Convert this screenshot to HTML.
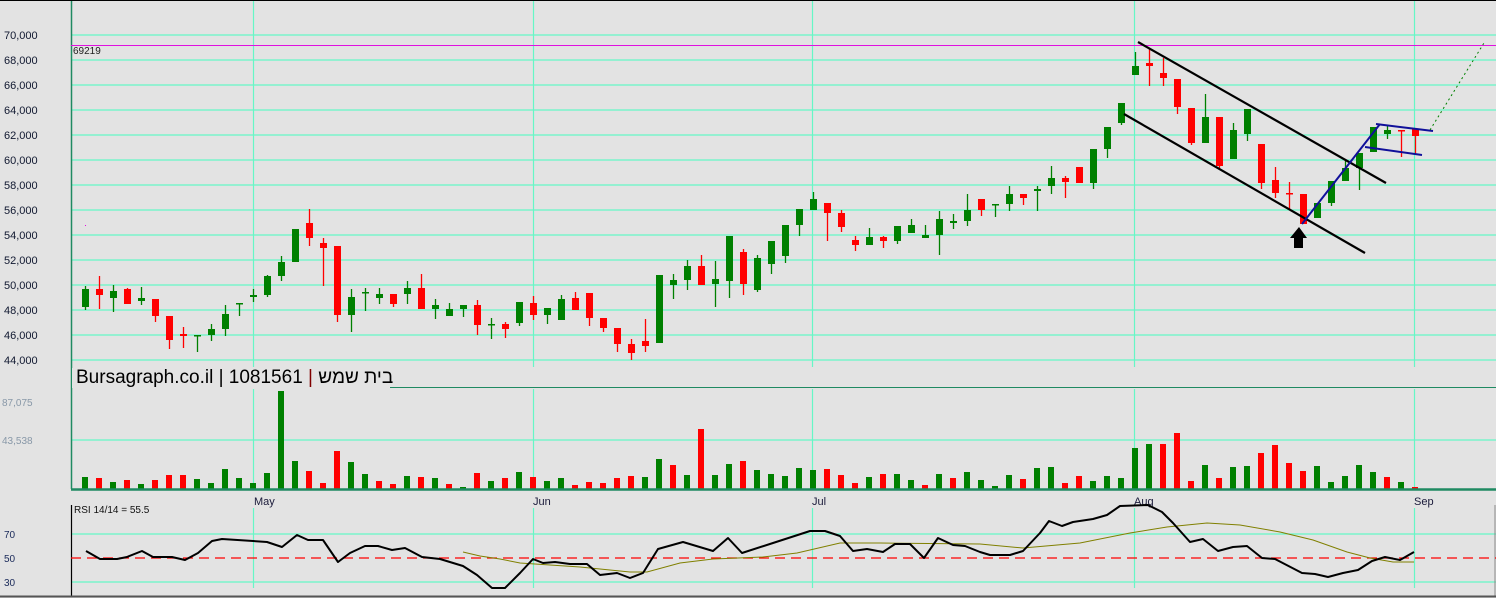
<!DOCTYPE html>
<html><head><meta charset="utf-8"><style>
html,body{margin:0;padding:0;background:#e3e3e3;}
svg{display:block;font-family:"Liberation Sans",sans-serif;}
#t{position:absolute;left:76px;top:367px;font:19px "Liberation Sans","Noto Sans CJK SC",sans-serif;color:#000;white-space:nowrap;line-height:22px;direction:ltr;}
</style></head><body>
<svg width="1496" height="598" viewBox="0 0 1496 598" xmlns="http://www.w3.org/2000/svg">
<rect width="1496" height="598" fill="#e3e3e3"/>
<line x1="0" y1="0.5" x2="1496" y2="0.5" stroke="#000" stroke-width="1"/>
<g stroke="#66f7c6" stroke-width="1.2">
<line x1="71" y1="35" x2="1496" y2="35"/><line x1="71" y1="60" x2="1496" y2="60"/><line x1="71" y1="85" x2="1496" y2="85"/><line x1="71" y1="110" x2="1496" y2="110"/><line x1="71" y1="135" x2="1496" y2="135"/><line x1="71" y1="160" x2="1496" y2="160"/><line x1="71" y1="185" x2="1496" y2="185"/><line x1="71" y1="210" x2="1496" y2="210"/><line x1="71" y1="235" x2="1496" y2="235"/><line x1="71" y1="260" x2="1496" y2="260"/><line x1="71" y1="285" x2="1496" y2="285"/><line x1="71" y1="310" x2="1496" y2="310"/><line x1="71" y1="335" x2="1496" y2="335"/><line x1="71" y1="360" x2="1496" y2="360"/>
<line x1="253.5" y1="1" x2="253.5" y2="367"/><line x1="533.5" y1="1" x2="533.5" y2="367"/><line x1="812.5" y1="1" x2="812.5" y2="367"/><line x1="1134.5" y1="1" x2="1134.5" y2="367"/><line x1="1414.5" y1="1" x2="1414.5" y2="367"/>
<line x1="253.5" y1="389" x2="253.5" y2="489"/><line x1="533.5" y1="389" x2="533.5" y2="489"/><line x1="812.5" y1="389" x2="812.5" y2="489"/><line x1="1134.5" y1="389" x2="1134.5" y2="489"/><line x1="1414.5" y1="389" x2="1414.5" y2="489"/>
<line x1="253.5" y1="508" x2="253.5" y2="588"/><line x1="533.5" y1="508" x2="533.5" y2="588"/><line x1="812.5" y1="508" x2="812.5" y2="588"/><line x1="1134.5" y1="508" x2="1134.5" y2="588"/><line x1="1414.5" y1="508" x2="1414.5" y2="588"/>
<line x1="71" y1="440" x2="1496" y2="440"/>
<line x1="71" y1="534" x2="1496" y2="534"/><line x1="71" y1="582" x2="1496" y2="582"/>
</g>
<line x1="71.5" y1="1" x2="71.5" y2="489" stroke="#1f8a62" stroke-width="1.5"/>
<line x1="71" y1="45.5" x2="1496" y2="45.5" stroke="#e010e0" stroke-width="1"/>
<text x="73" y="54" font-size="10" fill="#222">69219</text>
<rect x="85" y="225" width="1" height="1" fill="#e010e0"/>
<g font-size="11" fill="#101830">
<text x="4" y="39">70,000</text><text x="4" y="64">68,000</text><text x="4" y="89">66,000</text><text x="4" y="114">64,000</text><text x="4" y="139">62,000</text><text x="4" y="164">60,000</text><text x="4" y="189">58,000</text><text x="4" y="214">56,000</text><text x="4" y="239">54,000</text><text x="4" y="264">52,000</text><text x="4" y="289">50,000</text><text x="4" y="314">48,000</text><text x="4" y="339">46,000</text><text x="4" y="364">44,000</text>
</g>
<g stroke-width="1.3">
<g stroke="#008000" fill="#008000">
<line x1="85.5" y1="286" x2="85.5" y2="310"/><rect x="82" y="289" width="7" height="18" stroke="none"/>
<line x1="113.5" y1="285" x2="113.5" y2="312"/><rect x="110" y="291" width="7" height="7" stroke="none"/>
<line x1="141.5" y1="287" x2="141.5" y2="305"/><rect x="138" y="298" width="7" height="3" stroke="none"/>
<line x1="197.5" y1="335" x2="197.5" y2="352"/><rect x="194" y="335" width="7" height="1.5" stroke="none"/>
<line x1="211.5" y1="324" x2="211.5" y2="341"/><rect x="208" y="329" width="7" height="6" stroke="none"/>
<line x1="225.5" y1="305" x2="225.5" y2="336"/><rect x="222" y="314" width="7" height="15" stroke="none"/>
<line x1="239.5" y1="303" x2="239.5" y2="316"/><rect x="236" y="303" width="7" height="1.5" stroke="none"/>
<line x1="253.5" y1="289" x2="253.5" y2="302"/><rect x="250" y="295" width="7" height="2" stroke="none"/>
<line x1="267.5" y1="275" x2="267.5" y2="297"/><rect x="264" y="276" width="7" height="19" stroke="none"/>
<line x1="281.5" y1="256" x2="281.5" y2="281"/><rect x="278" y="262" width="7" height="14" stroke="none"/>
<rect x="292" y="229" width="7" height="33" stroke="none"/>
<line x1="351.5" y1="289" x2="351.5" y2="332"/><rect x="348" y="297" width="7" height="18" stroke="none"/>
<line x1="365.5" y1="288" x2="365.5" y2="311"/><rect x="362" y="292" width="7" height="1.5" stroke="none"/>
<line x1="379.5" y1="288" x2="379.5" y2="304"/><rect x="376" y="294" width="7" height="4" stroke="none"/>
<line x1="407.5" y1="281" x2="407.5" y2="304"/><rect x="404" y="288" width="7" height="6" stroke="none"/>
<line x1="435.5" y1="299" x2="435.5" y2="319"/><rect x="432" y="305" width="7" height="4" stroke="none"/>
<line x1="449.5" y1="303" x2="449.5" y2="316"/><rect x="446" y="309" width="7" height="7" stroke="none"/>
<line x1="463.5" y1="305" x2="463.5" y2="317"/><rect x="460" y="305" width="7" height="4" stroke="none"/>
<line x1="491.5" y1="318" x2="491.5" y2="339"/><rect x="488" y="324" width="7" height="1.5" stroke="none"/>
<line x1="519.5" y1="302" x2="519.5" y2="326"/><rect x="516" y="302" width="7" height="21" stroke="none"/>
<line x1="547.5" y1="308" x2="547.5" y2="324"/><rect x="544" y="308" width="7" height="7" stroke="none"/>
<line x1="561.5" y1="295" x2="561.5" y2="320"/><rect x="558" y="299" width="7" height="21" stroke="none"/>
<rect x="656" y="275" width="7" height="68" stroke="none"/>
<line x1="673.5" y1="274" x2="673.5" y2="299"/><rect x="670" y="280" width="7" height="5" stroke="none"/>
<line x1="687.5" y1="260" x2="687.5" y2="290"/><rect x="684" y="266" width="7" height="14" stroke="none"/>
<line x1="715.5" y1="261" x2="715.5" y2="307"/><rect x="712" y="279" width="7" height="5" stroke="none"/>
<line x1="729.5" y1="236" x2="729.5" y2="298"/><rect x="726" y="236" width="7" height="45" stroke="none"/>
<line x1="757.5" y1="255" x2="757.5" y2="292"/><rect x="754" y="258" width="7" height="32" stroke="none"/>
<line x1="771.5" y1="241" x2="771.5" y2="274"/><rect x="768" y="241" width="7" height="23" stroke="none"/>
<line x1="785.5" y1="225" x2="785.5" y2="263"/><rect x="782" y="225" width="7" height="31" stroke="none"/>
<line x1="799.5" y1="209" x2="799.5" y2="236"/><rect x="796" y="209" width="7" height="16" stroke="none"/>
<line x1="813.5" y1="192" x2="813.5" y2="210"/><rect x="810" y="199" width="7" height="11" stroke="none"/>
<line x1="869.5" y1="228" x2="869.5" y2="245"/><rect x="866" y="237" width="7" height="8" stroke="none"/>
<line x1="897.5" y1="226" x2="897.5" y2="244"/><rect x="894" y="226" width="7" height="15" stroke="none"/>
<line x1="911.5" y1="219" x2="911.5" y2="233"/><rect x="908" y="225" width="7" height="8" stroke="none"/>
<line x1="925.5" y1="225" x2="925.5" y2="238"/><rect x="922" y="235" width="7" height="3" stroke="none"/>
<line x1="939.5" y1="211" x2="939.5" y2="255"/><rect x="936" y="219" width="7" height="16" stroke="none"/>
<line x1="953.5" y1="214" x2="953.5" y2="229"/><rect x="950" y="221" width="7" height="2" stroke="none"/>
<line x1="967.5" y1="194" x2="967.5" y2="226"/><rect x="964" y="210" width="7" height="11" stroke="none"/>
<line x1="995.5" y1="204" x2="995.5" y2="217"/><rect x="992" y="204" width="7" height="1.5" stroke="none"/>
<line x1="1009.5" y1="186" x2="1009.5" y2="211"/><rect x="1006" y="194" width="7" height="10" stroke="none"/>
<line x1="1037.5" y1="186" x2="1037.5" y2="211"/><rect x="1034" y="189" width="7" height="2" stroke="none"/>
<line x1="1051.5" y1="166" x2="1051.5" y2="194"/><rect x="1048" y="178" width="7" height="8" stroke="none"/>
<line x1="1093.5" y1="149" x2="1093.5" y2="189"/><rect x="1090" y="149" width="7" height="34" stroke="none"/>
<line x1="1107.5" y1="127" x2="1107.5" y2="158"/><rect x="1104" y="127" width="7" height="22" stroke="none"/>
<line x1="1121.5" y1="103" x2="1121.5" y2="125"/><rect x="1118" y="103" width="7" height="20" stroke="none"/>
<line x1="1135.5" y1="52" x2="1135.5" y2="75"/><rect x="1132" y="66" width="7" height="9" stroke="none"/>
<line x1="1205.5" y1="94" x2="1205.5" y2="143"/><rect x="1202" y="117" width="7" height="26" stroke="none"/>
<line x1="1233.5" y1="123" x2="1233.5" y2="159"/><rect x="1230" y="130" width="7" height="29" stroke="none"/>
<line x1="1247.5" y1="109" x2="1247.5" y2="141"/><rect x="1244" y="109" width="7" height="25" stroke="none"/>
<rect x="1314" y="203" width="7" height="15" stroke="none"/>
<line x1="1331.5" y1="181" x2="1331.5" y2="206"/><rect x="1328" y="181" width="7" height="22" stroke="none"/>
<line x1="1345.5" y1="160" x2="1345.5" y2="181"/><rect x="1342" y="168" width="7" height="13" stroke="none"/>
<line x1="1359.5" y1="153" x2="1359.5" y2="190"/><rect x="1356" y="153" width="7" height="15" stroke="none"/>
<rect x="1370" y="127" width="7" height="25" stroke="none"/>
<line x1="1387.5" y1="126" x2="1387.5" y2="139"/><rect x="1384" y="130" width="7" height="4" stroke="none"/>
</g>
<g stroke="#ff0000" fill="#ff0000">
<line x1="99.5" y1="276" x2="99.5" y2="309"/><rect x="96" y="289" width="7" height="6" stroke="none"/>
<line x1="127.5" y1="288" x2="127.5" y2="304"/><rect x="124" y="289" width="7" height="15" stroke="none"/>
<line x1="155.5" y1="299" x2="155.5" y2="322"/><rect x="152" y="299" width="7" height="17" stroke="none"/>
<line x1="169.5" y1="316" x2="169.5" y2="349"/><rect x="166" y="316" width="7" height="24" stroke="none"/>
<line x1="183.5" y1="327" x2="183.5" y2="348"/><rect x="180" y="334" width="7" height="2" stroke="none"/>
<line x1="309.5" y1="209" x2="309.5" y2="246"/><rect x="306" y="223" width="7" height="15" stroke="none"/>
<line x1="323.5" y1="238" x2="323.5" y2="286"/><rect x="320" y="243" width="7" height="5" stroke="none"/>
<line x1="337.5" y1="246" x2="337.5" y2="322"/><rect x="334" y="246" width="7" height="69" stroke="none"/>
<line x1="393.5" y1="294" x2="393.5" y2="307"/><rect x="390" y="294" width="7" height="10" stroke="none"/>
<line x1="421.5" y1="274" x2="421.5" y2="309"/><rect x="418" y="288" width="7" height="21" stroke="none"/>
<line x1="477.5" y1="300" x2="477.5" y2="335"/><rect x="474" y="305" width="7" height="20" stroke="none"/>
<line x1="505.5" y1="322" x2="505.5" y2="338"/><rect x="502" y="324" width="7" height="5" stroke="none"/>
<line x1="533.5" y1="296" x2="533.5" y2="320"/><rect x="530" y="303" width="7" height="12" stroke="none"/>
<line x1="575.5" y1="292" x2="575.5" y2="310"/><rect x="572" y="298" width="7" height="12" stroke="none"/>
<line x1="589.5" y1="293" x2="589.5" y2="326"/><rect x="586" y="293" width="7" height="25" stroke="none"/>
<line x1="603.5" y1="318" x2="603.5" y2="332"/><rect x="600" y="318" width="7" height="10" stroke="none"/>
<line x1="617.5" y1="328" x2="617.5" y2="352"/><rect x="614" y="328" width="7" height="16" stroke="none"/>
<line x1="631.5" y1="339" x2="631.5" y2="360"/><rect x="628" y="344" width="7" height="9" stroke="none"/>
<line x1="645.5" y1="319" x2="645.5" y2="352"/><rect x="642" y="341" width="7" height="5" stroke="none"/>
<line x1="701.5" y1="255" x2="701.5" y2="285"/><rect x="698" y="266" width="7" height="19" stroke="none"/>
<line x1="743.5" y1="249" x2="743.5" y2="295"/><rect x="740" y="252" width="7" height="32" stroke="none"/>
<line x1="827.5" y1="203" x2="827.5" y2="241"/><rect x="824" y="203" width="7" height="10" stroke="none"/>
<line x1="841.5" y1="210" x2="841.5" y2="232"/><rect x="838" y="213" width="7" height="14" stroke="none"/>
<line x1="855.5" y1="236" x2="855.5" y2="251"/><rect x="852" y="240" width="7" height="5" stroke="none"/>
<line x1="883.5" y1="236" x2="883.5" y2="248"/><rect x="880" y="237" width="7" height="4" stroke="none"/>
<line x1="981.5" y1="199" x2="981.5" y2="216"/><rect x="978" y="199" width="7" height="11" stroke="none"/>
<line x1="1023.5" y1="194" x2="1023.5" y2="205"/><rect x="1020" y="194" width="7" height="4" stroke="none"/>
<line x1="1065.5" y1="176" x2="1065.5" y2="198"/><rect x="1062" y="178" width="7" height="4" stroke="none"/>
<rect x="1076" y="167" width="7" height="16" stroke="none"/>
<line x1="1149.5" y1="48" x2="1149.5" y2="86"/><rect x="1146" y="63" width="7" height="3" stroke="none"/>
<line x1="1163.5" y1="58" x2="1163.5" y2="86"/><rect x="1160" y="73" width="7" height="5" stroke="none"/>
<line x1="1177.5" y1="79" x2="1177.5" y2="114"/><rect x="1174" y="79" width="7" height="28" stroke="none"/>
<line x1="1191.5" y1="108" x2="1191.5" y2="145"/><rect x="1188" y="108" width="7" height="35" stroke="none"/>
<line x1="1219.5" y1="117" x2="1219.5" y2="170"/><rect x="1216" y="117" width="7" height="49" stroke="none"/>
<line x1="1261.5" y1="144" x2="1261.5" y2="189"/><rect x="1258" y="144" width="7" height="39" stroke="none"/>
<line x1="1275.5" y1="167" x2="1275.5" y2="198"/><rect x="1272" y="180" width="7" height="13" stroke="none"/>
<line x1="1289.5" y1="182" x2="1289.5" y2="210"/><rect x="1286" y="193" width="7" height="1.5" stroke="none"/>
<rect x="1300" y="194" width="7" height="30" stroke="none"/>
<line x1="1401.5" y1="130" x2="1401.5" y2="157"/><rect x="1398" y="130" width="7" height="1.5" stroke="none"/>
<line x1="1415.5" y1="129" x2="1415.5" y2="154"/><rect x="1412" y="129" width="7" height="7" stroke="none"/>
</g>
</g>
<g stroke="#000" stroke-width="2.2">
<line x1="1138" y1="42" x2="1386" y2="183"/>
<line x1="1124" y1="114" x2="1365" y2="253"/>
</g>
<g stroke="#10109a" stroke-width="2" fill="none">
<line x1="1302" y1="224" x2="1380" y2="124"/>
<line x1="1376" y1="124" x2="1433" y2="131"/>
<line x1="1365" y1="147" x2="1422" y2="155"/>
</g>
<line x1="1430" y1="130" x2="1484" y2="43" stroke="#008000" stroke-width="1" stroke-dasharray="2,3"/>
<path d="M1299 227 L1307 238 L1303 238 L1303 248 L1294 248 L1294 238 L1290 238 Z" fill="#000"/>
<rect x="72" y="368" width="318" height="20" fill="#e3e3e3"/>
<line x1="390" y1="387.5" x2="1496" y2="387.5" stroke="#1f8a62" stroke-width="1"/>
<text x="2" y="406" font-size="10" fill="#8898a8">87,075</text>
<text x="2" y="444" font-size="10" fill="#8898a8">43,538</text>
<g fill="#008000">
<rect x="82" y="477" width="6" height="12"/><rect x="110" y="482" width="6" height="7"/><rect x="138" y="484" width="6" height="5"/><rect x="194" y="479" width="6" height="10"/><rect x="208" y="483" width="6" height="6"/><rect x="222" y="469" width="6" height="20"/><rect x="236" y="478" width="6" height="11"/><rect x="250" y="483" width="6" height="6"/><rect x="264" y="473" width="6" height="16"/><rect x="278" y="391" width="6" height="98"/><rect x="292" y="461" width="6" height="28"/><rect x="348" y="462" width="6" height="27"/><rect x="362" y="474" width="6" height="15"/><rect x="404" y="476" width="6" height="13"/><rect x="432" y="478" width="6" height="11"/><rect x="460" y="487" width="6" height="2"/><rect x="488" y="481" width="6" height="8"/>
<rect x="516" y="472" width="6" height="17"/><rect x="544" y="481" width="6" height="8"/><rect x="558" y="478" width="6" height="11"/><rect x="642" y="477" width="6" height="12"/><rect x="656" y="459" width="6" height="30"/><rect x="684" y="475" width="6" height="14"/><rect x="712" y="475" width="6" height="14"/><rect x="726" y="464" width="6" height="25"/><rect x="754" y="470" width="6" height="19"/><rect x="768" y="474" width="6" height="15"/><rect x="782" y="476" width="6" height="13"/><rect x="796" y="468" width="6" height="21"/><rect x="810" y="470" width="6" height="19"/><rect x="866" y="477" width="6" height="12"/><rect x="894" y="474" width="6" height="15"/><rect x="908" y="480" width="6" height="9"/><rect x="936" y="474" width="6" height="15"/><rect x="964" y="472" width="6" height="17"/><rect x="978" y="480" width="6" height="9"/>
<rect x="992" y="486" width="6" height="3"/><rect x="1006" y="475" width="6" height="14"/><rect x="1034" y="468" width="6" height="21"/><rect x="1048" y="467" width="6" height="22"/><rect x="1090" y="481" width="6" height="8"/><rect x="1104" y="476" width="6" height="13"/><rect x="1118" y="478" width="6" height="11"/><rect x="1132" y="448" width="6" height="41"/><rect x="1146" y="444" width="6" height="45"/><rect x="1202" y="465" width="6" height="24"/><rect x="1230" y="467" width="6" height="22"/><rect x="1244" y="466" width="6" height="23"/><rect x="1314" y="466" width="6" height="23"/><rect x="1328" y="482" width="6" height="7"/><rect x="1342" y="476" width="6" height="13"/><rect x="1356" y="465" width="6" height="24"/><rect x="1370" y="472" width="6" height="17"/><rect x="1398" y="482" width="6" height="7"/>
</g>
<g fill="#ff0000">
<rect x="96" y="478" width="6" height="11"/><rect x="124" y="480" width="6" height="9"/><rect x="152" y="480" width="6" height="9"/><rect x="166" y="475" width="6" height="14"/><rect x="180" y="475" width="6" height="14"/><rect x="306" y="471" width="6" height="18"/><rect x="320" y="483" width="6" height="6"/><rect x="334" y="451" width="6" height="38"/><rect x="376" y="481" width="6" height="8"/><rect x="390" y="484" width="6" height="5"/><rect x="418" y="477" width="6" height="12"/><rect x="446" y="484" width="6" height="5"/><rect x="474" y="473" width="6" height="16"/><rect x="502" y="478" width="6" height="11"/><rect x="530" y="477" width="6" height="12"/>
<rect x="572" y="485" width="6" height="4"/><rect x="586" y="482" width="6" height="7"/><rect x="600" y="483" width="6" height="6"/><rect x="614" y="478" width="6" height="11"/><rect x="628" y="476" width="6" height="13"/><rect x="670" y="465" width="6" height="24"/><rect x="698" y="429" width="6" height="60"/><rect x="740" y="461" width="6" height="28"/><rect x="824" y="469" width="6" height="20"/><rect x="838" y="475" width="6" height="14"/><rect x="852" y="483" width="6" height="6"/><rect x="880" y="474" width="6" height="15"/><rect x="922" y="485" width="6" height="4"/><rect x="950" y="478" width="6" height="11"/>
<rect x="1020" y="479" width="6" height="10"/><rect x="1062" y="483" width="6" height="6"/><rect x="1076" y="476" width="6" height="13"/><rect x="1160" y="444" width="6" height="45"/><rect x="1174" y="433" width="6" height="56"/><rect x="1188" y="481" width="6" height="8"/><rect x="1216" y="478" width="6" height="11"/><rect x="1258" y="453" width="6" height="36"/><rect x="1272" y="445" width="6" height="44"/><rect x="1286" y="463" width="6" height="26"/><rect x="1300" y="471" width="6" height="18"/><rect x="1384" y="477" width="6" height="12"/><rect x="1412" y="487" width="6" height="2"/>
</g>
<line x1="71" y1="489.5" x2="1496" y2="489.5" stroke="#1f8a62" stroke-width="2.5"/>
<g font-size="11" fill="#1a1a3a">
<text x="254" y="505">May</text><text x="533" y="505">Jun</text><text x="812" y="505">Jul</text><text x="1134" y="505">Aug</text><text x="1414" y="505">Sep</text>
</g>
<line x1="71.5" y1="505" x2="71.5" y2="596" stroke="#000" stroke-width="1.2"/>
<line x1="1495" y1="505" x2="1495" y2="596" stroke="#888" stroke-width="1"/>
<line x1="0" y1="596.5" x2="1496" y2="596.5" stroke="#555" stroke-width="2"/>
<text x="74" y="513" font-size="10" fill="#111">RSI 14/14 = 55.5</text>
<g font-size="10" fill="#1a2a5a"><text x="4" y="538">70</text><text x="4" y="562">50</text><text x="4" y="586">30</text></g>
<line x1="71" y1="558" x2="1496" y2="558" stroke="#ff0000" stroke-width="1.2" stroke-dasharray="10,6"/>
<polyline fill="none" stroke="#808000" stroke-width="1" points="463,552 480,556 500,559 520,563 580,567 630,572 647,572 680,563 713,559 763,557 797,553 840,543 880,543 980,544 1023,548 1080,543 1130,533 1167,527 1207,523 1240,525 1280,532 1313,540 1347,552 1370,558 1393,562 1414,562"/>
<polyline fill="none" stroke="#000" stroke-width="2" stroke-linejoin="round" points="86,551 100,559 117,559 127,557 142,551 153,557 172,557 185,560 198,553 212,541 222,539 253,541 267,542 282,547 297,535 308,540 323,540 338,562 350,553 365,546 378,546 392,550 405,548 422,557 440,559 463,566 477,575 492,588 505,588 520,573 533,559 543,563 555,562 570,564 587,564 600,575 617,573 630,578 643,573 658,549 683,542 713,551 728,538 742,553 773,543 810,531 825,531 840,536 853,551 867,549 883,552 895,544 910,544 924,558 938,538 953,545 965,546 980,552 990,555 1010,555 1023,551 1040,533 1049,521 1062,526 1073,522 1093,519 1107,515 1120,506 1148,505 1162,512 1173,523 1190,542 1203,539 1218,551 1233,547 1247,546 1262,558 1275,559 1302,573 1315,574 1328,577 1343,573 1358,570 1372,561 1385,557 1400,560 1414,552"/>
</svg>
<div id="t">Bursagraph.co.il | 1081561 <span style="color:#800000">|</span> <span>בית שמש</span></div>
</body></html>
